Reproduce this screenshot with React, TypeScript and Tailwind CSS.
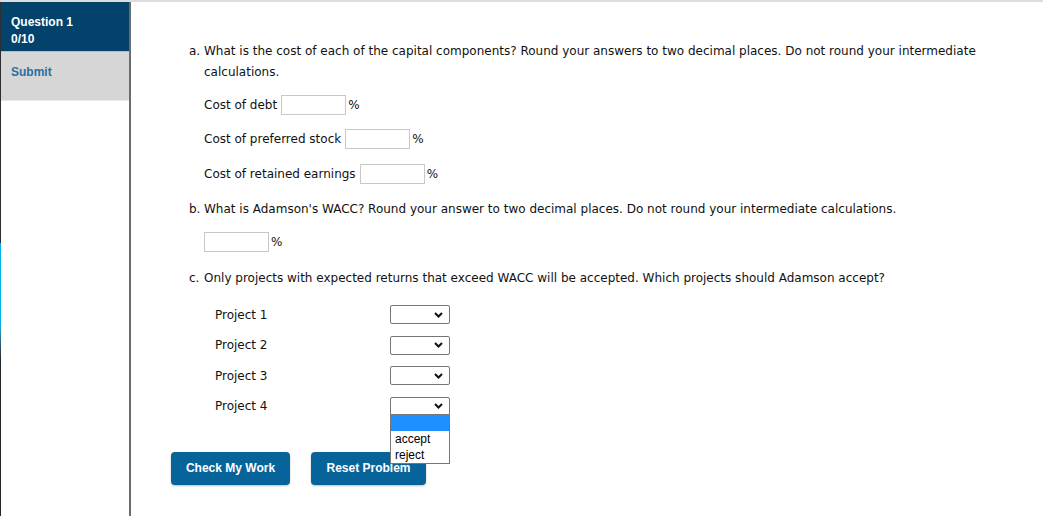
import type { ReactNode } from "react";

const projects = ["Project 1", "Project 2", "Project 3", "Project 4"];

/** Text input box followed by a percent sign. */
function PercentInput() {
  return (
    <span className="flex items-center">
      <span className="box-border h-[20px] w-[65px] border border-[#c8c8c8] bg-white" />
      <span className="ml-[2px]">%</span>
    </span>
  );
}

/** Closed native-looking select with a bold chevron. */
function SelectBox({ open }: { open?: boolean }) {
  return (
    <div className="relative">
      <div className="box-border flex h-[19px] w-[60px] items-center justify-end rounded-[2px] border border-[#767676] bg-white pr-[6px]">
        <svg width="9" height="6" viewBox="0 0 9 6" aria-hidden>
          <path d="M1 1l3.5 3.5L8 1" fill="none" stroke="#111" strokeWidth="2" />
        </svg>
      </div>
      {open && (
        <ul className="absolute left-0 top-[17px] z-10 box-border w-[60px] border border-[#767676] bg-white font-['Liberation_Sans',Arial,sans-serif] text-[12px] leading-[16px] text-black">
          <li className="h-[16px] bg-[#1e90ff]" />
          <li className="pl-[4px]">accept</li>
          <li className="pl-[4px]">reject</li>
        </ul>
      )}
    </div>
  );
}

function Row({ label, children, className }: { label: string; children: ReactNode; className: string }) {
  return (
    <div className={`flex h-[20px] items-center pl-[15px] ${className}`}>
      <span className="mr-[4px]">{label}</span>
      {children}
    </div>
  );
}

export default function App() {
  return (
    <div className="flex min-h-[516px] border-t-2 border-[#dddddd] bg-white">
      {/* left edge strip */}
      <div className="flex w-px flex-col">
        <div className="h-[241px] bg-[#2b2e33]" />
        <div className="h-[80px] bg-[#00b4e6]" />
        <div className="h-[36px] bg-gradient-to-b from-[#00b4e6] to-[#23272c]" />
        <div className="flex-1 bg-[#23272c]" />
      </div>

      <aside className="w-[130px] shrink-0 border-r-2 border-[#6b6b6b] font-['Liberation_Sans',Arial,sans-serif] text-[12px] font-bold">
        <div className="flex h-[49px] flex-col gap-[3px] bg-[#03426a] pl-[10px] pt-[13px] leading-[14px] text-white">
          <span>Question 1</span>
          <span>0/10</span>
        </div>
        <div className="h-px bg-[#bcbcbc]" />
        <div className="flex h-[49px] items-center border-b border-[#e8e8e8] bg-[#d6d6d6] pb-[8px] pl-[10px] text-[#2a6fa3]">
          Submit
        </div>
      </aside>

      <main className="flex-1 pl-[58px] pt-[39px] font-['DejaVu_Sans',Verdana,sans-serif] text-[12px] text-[#111]">
        <div className="flex leading-[21px]">
          <span className="w-[15px] shrink-0">a.</span>
          <p className="w-[790px]">
            What is the cost of each of the capital components? Round your answers to two decimal places. Do not
            round your intermediate calculations.
          </p>
        </div>

        <Row label="Cost of debt" className="mt-[12px]">
          <PercentInput />
        </Row>
        <Row label="Cost of preferred stock" className="mt-[14px]">
          <PercentInput />
        </Row>
        <Row label="Cost of retained earnings" className="mt-[15px]">
          <PercentInput />
        </Row>

        <div className="mt-[15px] flex leading-[21px]">
          <span className="w-[15px] shrink-0">b.</span>
          <p>What is Adamson's WACC? Round your answer to two decimal places. Do not round your intermediate calculations.</p>
        </div>
        <div className="mt-[12px] flex h-[20px] items-center pl-[15px]">
          <PercentInput />
        </div>

        <div className="mt-[16px] flex leading-[21px]">
          <span className="w-[15px] shrink-0">c.</span>
          <p>Only projects with expected returns that exceed WACC will be accepted. Which projects should Adamson accept?</p>
        </div>

        <div className="mt-[16px] flex flex-col gap-[11.6px] pl-[26px]">
          {projects.map((p, i) => (
            <div key={p} className="flex h-[19px] items-center">
              <span className="w-[175px]">{p}</span>
              <SelectBox open={i === projects.length - 1} />
            </div>
          ))}
        </div>

        <div className="-ml-[18px] mt-[36px] flex gap-[21px] font-['Liberation_Sans',Arial,sans-serif] text-[12px] font-bold text-white">
          <button className="h-[33px] w-[119px] rounded-[4px] bg-[#07649a] shadow-[0_1px_2px_rgba(0,0,0,0.25)]">
            Check My Work
          </button>
          <button className="h-[33px] w-[115px] rounded-[4px] bg-[#07649a] shadow-[0_1px_2px_rgba(0,0,0,0.25)]">
            Reset Problem
          </button>
        </div>
      </main>
    </div>
  );
}
